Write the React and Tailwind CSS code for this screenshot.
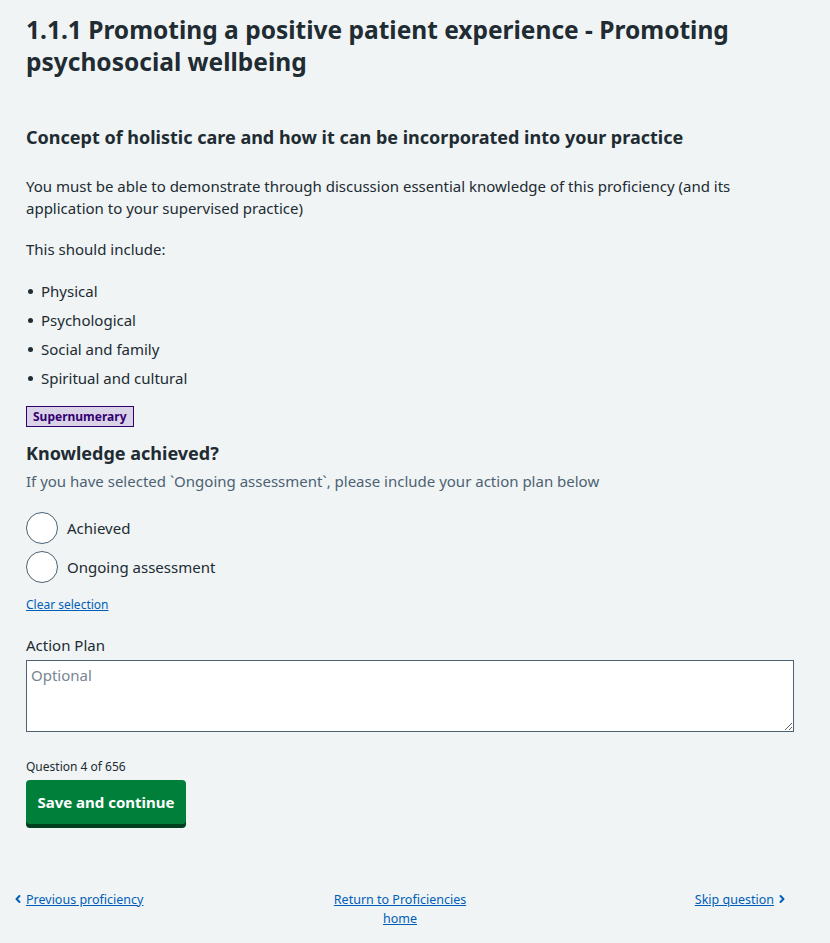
import { ChevronLeft, ChevronRight } from 'lucide-react';

const items = ['Physical', 'Psychological', 'Social and family', 'Spiritual and cultural'];

export default function App() {
    return (
        <div className="min-h-[943px] bg-[#f0f4f5] text-[#212b32] font-['Noto_Sans',sans-serif]">
            <div className="px-[26px] pt-[14px] w-[820px]">
                <h1 className="text-[24.5px] leading-[32px] font-bold">
                    1.1.1 Promoting a positive patient experience - Promoting psychosocial wellbeing
                </h1>

                <h2 className="mt-[47px] text-[18px] leading-[24px] font-bold">
                    Concept of holistic care and how it can be incorporated into your practice
                </h2>

                <p className="mt-[26px] text-[15px] leading-[22px]">
                    You must be able to demonstrate through discussion essential knowledge of this proficiency (and its application to your supervised practice)
                </p>
                <p className="mt-[19px] text-[15px] leading-[22px]">This should include:</p>

                <ul className="mt-[20px] text-[15px] leading-[22px]">
                    {items.map((item) => (
                        <li key={item} className="flex items-center mb-[7px]">
                            <span className="w-[5px] h-[5px] rounded-full bg-[#212b32] ml-[2px] mr-[8px]" />
                            <span>{item}</span>
                        </li>
                    ))}
                </ul>

                <span className="inline-block mt-[10px] px-[6px] h-[21px] leading-[19px] text-[12px] font-bold text-[#330072] bg-[#dad2e7] border border-[#330072]">
                    Supernumerary
                </span>

                <h2 className="mt-[13px] text-[18px] leading-[26px] font-bold">Knowledge achieved?</h2>
                <p className="mt-[4px] text-[15px] leading-[22px] text-[#4c6272]">
                    If you have selected `Ongoing assessment`, please include your action plan below
                </p>

                <div className="mt-[20px] flex flex-col gap-[7px]">
                    {['Achieved', 'Ongoing assessment'].map((label) => (
                        <label key={label} className="flex items-center gap-[9px] text-[15px]">
                            <span className="w-[32px] h-[32px] rounded-full border-[1.5px] border-[#4c6272] bg-white" />
                            <span>{label}</span>
                        </label>
                    ))}
                </div>

                <a href="#" className="block mt-[13px] text-[12px] leading-[18px] text-[#005eb8] underline">
                    Clear selection
                </a>

                <label className="block mt-[20px] text-[15px] leading-[22px]">Action Plan</label>
                <textarea
                    placeholder="Optional"
                    className="block mt-[4px] w-[768px] h-[72px] bg-white border border-[#4c6272] px-[4px] py-[3px] text-[15px] leading-[22px] placeholder:text-[#768692] outline-none"
                />

                <p className="mt-[26px] text-[12px] leading-[18px]">Question 4 of 656</p>
                <button className="mt-[4px] w-[160px] h-[44px] rounded-[4px] bg-[#007f3b] text-white text-[15px] font-bold shadow-[0_4px_0_#00401e]">
                    Save and continue
                </button>
            </div>

            <div className="mt-[66px] grid grid-cols-3 px-[12px] w-[800px] text-[12.5px] leading-[19px]">
                <a href="#" className="flex items-start gap-[2px] text-[#005eb8]">
                    <ChevronLeft className="w-[12px] h-[16px] mt-[1px]" strokeWidth={4} />
                    <span className="underline">Previous proficiency</span>
                </a>
                <a href="#" className="text-center text-[#005eb8] underline px-[60px]">
                    Return to Proficiencies home
                </a>
                <a href="#" className="flex items-start justify-end gap-[2px] text-[#005eb8]">
                    <span className="underline">Skip question</span>
                    <ChevronRight className="w-[12px] h-[16px] mt-[1px]" strokeWidth={4} />
                </a>
            </div>
        </div>
    );
}
